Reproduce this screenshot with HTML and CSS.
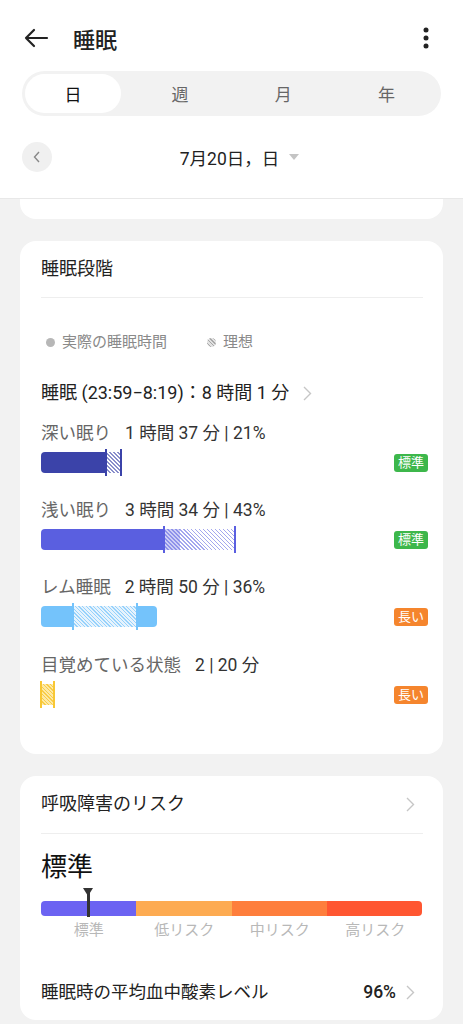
FILE: index.html
```html
<!DOCTYPE html>
<html lang="ja">
<head>
  <meta charset="UTF-8">
  <title>睡眠</title>
  <meta name="viewport" content="width=device-width, initial-scale=1" />
  <link rel="stylesheet" href="styles.css">
</head>
<body>
  <header class="top">
    <div class="appbar">
      <svg class="back" width="26" height="20" viewBox="0 0 26 20"><path d="M24 10H3M11 2L3 10l8 8" fill="none" stroke="#222" stroke-width="2.2" stroke-linecap="round" stroke-linejoin="round"/></svg>
      <h1>睡眠</h1>
      <svg class="more" width="6" height="22" viewBox="0 0 6 22"><circle cx="3" cy="3" r="2.5" fill="#222"/><circle cx="3" cy="11" r="2.5" fill="#222"/><circle cx="3" cy="19" r="2.5" fill="#222"/></svg>
    </div>

    <div class="tabs">
      <div class="tab active">日</div>
      <div class="tab">週</div>
      <div class="tab">月</div>
      <div class="tab">年</div>
    </div>

    <div class="daterow">
      <div class="prev"><svg width="8" height="12" viewBox="0 0 8 12"><path d="M6 1L1.5 6 6 11" fill="none" stroke="#888" stroke-width="1.4"/></svg></div>
      <div class="date">7月20日，日 <span class="caret"></span></div>
    </div>
  </header>

  <div class="card-tail"></div>

  <section class="card">
    <div class="card-title">睡眠段階</div>

    <div class="legend">
      <span class="lg"><i class="dot"></i>実際の睡眠時間</span>
      <span class="lg"><i class="dot hatched"></i>理想</span>
    </div>

    <div class="summary">睡眠 (23:59−8:19)：8 時間 1 分
      <svg class="chev" width="9" height="15" viewBox="0 0 9 15"><path d="M1 1l6.5 6.5L1 14" fill="none" stroke="#c6c6c6" stroke-width="1.4"/></svg>
    </div>

    <div class="stage deep">
      <div class="stage-label">深い眠り<b>1 時間 37 分 | 21%</b></div>
      <div class="stage-row">
        <div class="bar">
          <span class="seg solid first" style="width:65px"></span>
          <span class="seg hatch" style="width:15px"></span>
        </div>
        <span class="badge ok">標準</span>
      </div>
    </div>

    <div class="stage light">
      <div class="stage-label">浅い眠り<b>3 時間 34 分 | 43%</b></div>
      <div class="stage-row">
        <div class="bar">
          <span class="seg solid first" style="width:123px"></span>
          <span class="seg hatch dense" style="width:71px"></span>
        </div>
        <span class="badge ok">標準</span>
      </div>
    </div>

    <div class="stage rem">
      <div class="stage-label">レム睡眠<b>2 時間 50 分 | 36%</b></div>
      <div class="stage-row">
        <div class="bar">
          <span class="seg solid first" style="width:32px"></span>
          <span class="seg hatch" style="width:64px"></span>
          <span class="seg solid last" style="width:20px"></span>
        </div>
        <span class="badge long">長い</span>
      </div>
    </div>

    <div class="stage awake">
      <div class="stage-label">目覚めている状態<b>2 | 20 分</b></div>
      <div class="stage-row">
        <div class="bar">
          <span class="seg hatch" style="width:13px"></span>
        </div>
        <span class="badge long">長い</span>
      </div>
    </div>
  </section>

  <section class="card risk">
    <div class="card-title with-chev">呼吸障害のリスク
      <svg class="chev" width="9" height="15" viewBox="0 0 9 15"><path d="M1 1l6.5 6.5L1 14" fill="none" stroke="#c6c6c6" stroke-width="1.4"/></svg>
    </div>

    <div class="risk-level">標準</div>

    <div class="risk-bar">
      <span class="rs r1"></span>
      <span class="rs r2"></span>
      <span class="rs r3"></span>
      <span class="rs r4"></span>
      <span class="pin" style="left:46px"></span>
    </div>
    <div class="risk-labels">
      <span>標準</span><span>低リスク</span><span>中リスク</span><span>高リスク</span>
    </div>

    <div class="spo2">
      <span>睡眠時の平均血中酸素レベル</span>
      <span class="spo2-val">96%
        <svg class="chev" width="9" height="15" viewBox="0 0 9 15"><path d="M1 1l6.5 6.5L1 14" fill="none" stroke="#c6c6c6" stroke-width="1.4"/></svg>
      </span>
    </div>
  </section>
</body>
</html>
```

FILE: styles.css
```css
body { margin: 0; background: #f2f2f2; color: #222; font-family: Roboto, "Noto Sans CJK JP", sans-serif; }

.top { background: #fff; border-bottom: 1px solid #e8e8e8; padding: 0 22px; height: 199px; box-sizing: border-box; }
.appbar { display: flex; align-items: center; height: 67px; padding-top: 4px; }
.back { margin-left: 1px; }
.appbar h1 { font-size: 22px; font-weight: 500; margin: 0 0 0 24px; flex: 1; }
.more { margin-right: 12px; }

.tabs { display: grid; grid-template-columns: repeat(4, 1fr); background: #f2f2f2; border-radius: 23px; padding: 3px; height: 45px; box-sizing: border-box; }
.tab { display: flex; align-items: center; justify-content: center; font-size: 17px; color: #666; }
.tab.active { background: #fff; color: #111; border-radius: 20px; width: 96px; }

.daterow { position: relative; display: flex; align-items: center; justify-content: center; height: 30px; margin-top: 26px; }
.prev { position: absolute; left: 0; top: 0; width: 30px; height: 30px; border-radius: 50%; background: #f0f0f0; display: flex; align-items: center; justify-content: center; }
.date { font-size: 17.5px; color: #222; display: flex; align-items: center; margin-left: 16px; }
.caret { display: inline-block; margin-left: 10px; border-left: 5px solid transparent; border-right: 5px solid transparent; border-top: 6px solid #c4c4c4; }

.card-tail { background: #fff; height: 20px; margin: 0 20px; border-radius: 0 0 16px 16px; }

.card { background: #fff; margin: 22px 20px 0; border-radius: 16px; padding: 16px 20px 49px 21px; }
.card-title { font-size: 18px; line-height: 24px; padding-bottom: 16px; border-bottom: 1px solid #eeeeee; }
.with-chev { display: flex; justify-content: space-between; align-items: center; }
.chev { margin-left: 10px; }

.legend { display: flex; gap: 40px; margin-top: 34px; padding-left: 5px; font-size: 15px; line-height: 20px; color: #8a8a8a; }
.lg { display: flex; align-items: center; }
.dot { display: inline-block; width: 9px; height: 9px; border-radius: 50%; background: #b7b7b7; margin-right: 7px; }
.dot.hatched { background: repeating-linear-gradient(45deg, #a8a8a8 0 1px, #e2e2e2 1px 2.5px); }

.summary { display: flex; align-items: center; margin-top: 29px; font-size: 18px; line-height: 24px; color: #222; }
.summary .chev { margin-left: 14px; }

.stage { margin-top: 16px; }
.stage + .stage { margin-top: 25px; }
.stage.awake { margin-top: 26px; }
.stage-label { font-size: 17.5px; line-height: 24px; color: #666; }
.stage-label b { font-weight: 400; color: #333; margin-left: 14px; }
.stage-row { display: flex; justify-content: space-between; align-items: center; margin-top: 7px; margin-right: -5px; }
.bar { display: flex; height: 21px; }
.seg { display: block; height: 100%; position: relative; }
.seg.first { border-radius: 4px 0 0 4px; }
.seg.last { border-radius: 0 4px 4px 0; }
.seg.hatch::before, .seg.hatch::after { content: ""; position: absolute; top: -3px; bottom: -3px; width: 2px; background: var(--c); }
.seg.hatch::before { left: -1px; }
.seg.hatch::after { right: -1px; }

.deep { --c: #3b43a9; --h: rgba(59,67,169,0.6); }
.light { --c: #5a5fe0; --h: rgba(90,95,224,0.55); }
.rem { --c: #74c3fb; --h: rgba(116,195,251,0.75); }
.awake { --c: #f8c734; --h: rgba(248,199,52,0.9); }
.solid { background: var(--c); }
.hatch { background: repeating-linear-gradient(45deg, var(--h) 0 1px, #fff 1px 2.8px); }
.rem .hatch { background: repeating-linear-gradient(45deg, var(--h) 0 1px, #e6f3fd 1px 2.6px); }
.light .hatch.dense { background: linear-gradient(90deg, rgba(90,95,224,0.3) 0 16px, transparent 16px), repeating-linear-gradient(45deg, var(--h) 0 1px, #fff 1px 2.8px); }
.awake .hatch { background: repeating-linear-gradient(45deg, var(--h) 0 1px, #fde9a6 1px 2.6px); border-radius: 2px; }

.badge { font-size: 13px; line-height: 18px; color: #fff; padding: 0 4px; border-radius: 3px; }
.badge.ok { background: #3db74b; }
.badge.long { background: #f5852d; }

.risk { padding-bottom: 16px; }
.risk .card-title { padding-right: 8px; padding-bottom: 17px; }
.risk-level { font-size: 26px; line-height: 34px; margin-top: 16px; color: #111; }
.risk-bar { position: relative; display: flex; height: 15px; margin-top: 17px; margin-right: 1px; }
.rs { flex: 1; }
.r1 { background: #6c63f2; border-radius: 4px 0 0 4px; }
.r2 { background: #fdab52; }
.r3 { background: #fe7e3c; }
.r4 { background: #ff5631; border-radius: 0 4px 4px 0; }
.pin { position: absolute; top: -13px; bottom: -1px; width: 3px; background: #333; }
.pin::before { content: ""; position: absolute; top: 0; left: -4px; border-left: 5.5px solid transparent; border-right: 5.5px solid transparent; border-top: 8px solid #333; }
.risk-labels { display: grid; grid-template-columns: repeat(4, 1fr); text-align: center; font-size: 15px; line-height: 20px; color: #b8b8b8; margin-top: 4px; }

.spo2 { display: flex; justify-content: space-between; align-items: center; margin-top: 40px; font-size: 17.5px; line-height: 24px; color: #222; }
.spo2-val { display: flex; align-items: center; font-weight: 500; padding-right: 8px; }
```
